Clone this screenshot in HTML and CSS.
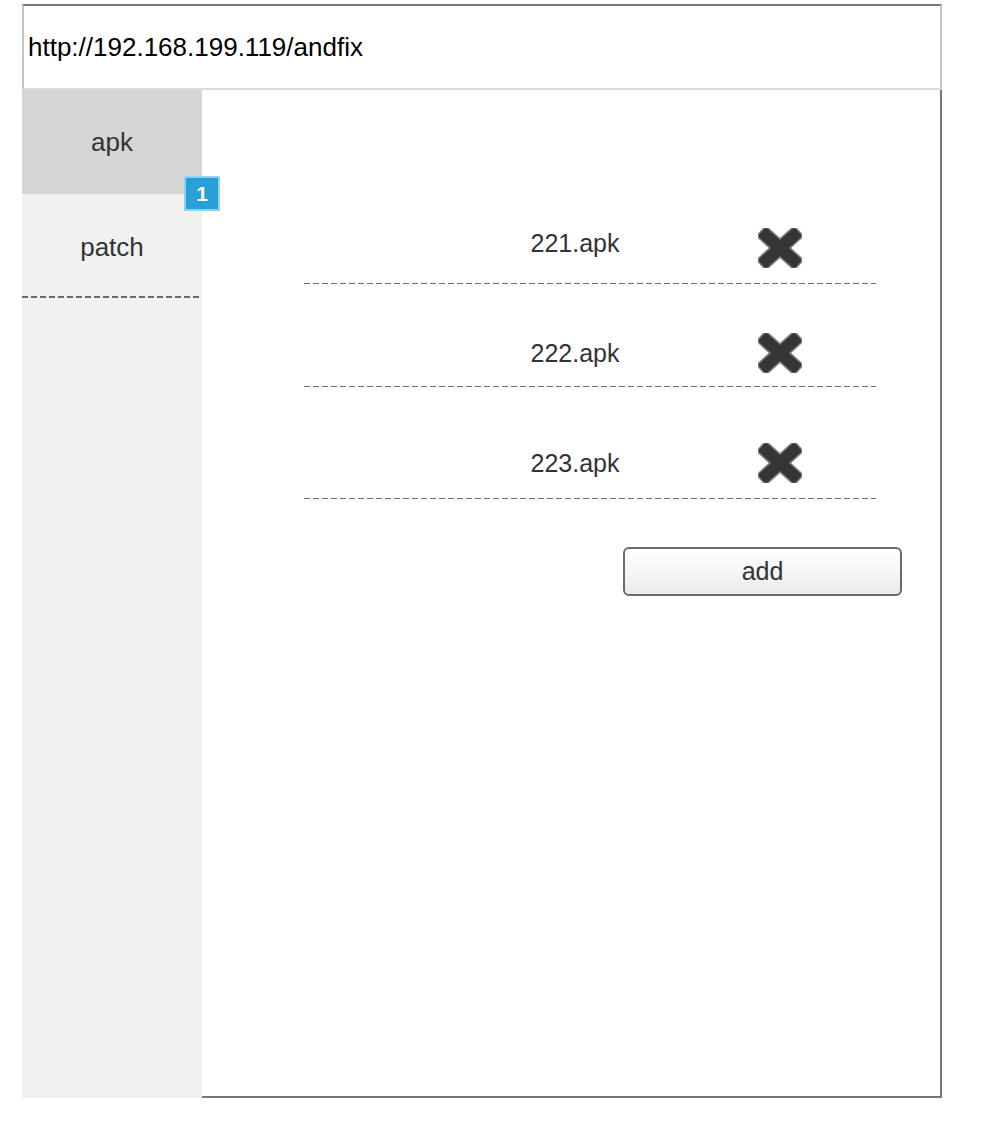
FILE: index.html
```html
<!DOCTYPE html>
<html>
<head>
<meta charset="utf-8">
<link rel="stylesheet" href="styles.css">
</head>
<body>
<div class="frame">
  <div class="urlbar">http://192.168.199.119/andfix</div>
  <div class="body">
    <div class="sidebar">
      <div class="tab tab-active">apk</div>
      <div class="tab tab-patch">patch</div>
      <div class="badge">1</div>
    </div>
    <div class="main">
      <div class="list">
        <div class="row row-1">
          <div class="name">221.apk</div>
          <svg class="del del-low" viewBox="0 0 44 40" width="44" height="40">
            <rect x="-26" y="-7.5" width="52" height="15" rx="4" fill="#7c7c7c" transform="translate(22 20) rotate(42)"/>
            <rect x="-26" y="-7.5" width="52" height="15" rx="4" fill="#7c7c7c" transform="translate(22 20) rotate(-42)"/>
            <rect x="-24.5" y="-6" width="49" height="12" rx="3" fill="#353535" transform="translate(22 20) rotate(42)"/>
            <rect x="-24.5" y="-6" width="49" height="12" rx="3" fill="#353535" transform="translate(22 20) rotate(-42)"/>
          </svg>
        </div>
        <div class="row row-2">
          <div class="name">222.apk</div>
          <svg class="del" viewBox="0 0 44 40" width="44" height="40">
            <rect x="-26" y="-7.5" width="52" height="15" rx="4" fill="#7c7c7c" transform="translate(22 20) rotate(42)"/>
            <rect x="-26" y="-7.5" width="52" height="15" rx="4" fill="#7c7c7c" transform="translate(22 20) rotate(-42)"/>
            <rect x="-24.5" y="-6" width="49" height="12" rx="3" fill="#353535" transform="translate(22 20) rotate(42)"/>
            <rect x="-24.5" y="-6" width="49" height="12" rx="3" fill="#353535" transform="translate(22 20) rotate(-42)"/>
          </svg>
        </div>
        <div class="row row-3">
          <div class="name">223.apk</div>
          <svg class="del" viewBox="0 0 44 40" width="44" height="40">
            <rect x="-26" y="-7.5" width="52" height="15" rx="4" fill="#7c7c7c" transform="translate(22 20) rotate(42)"/>
            <rect x="-26" y="-7.5" width="52" height="15" rx="4" fill="#7c7c7c" transform="translate(22 20) rotate(-42)"/>
            <rect x="-24.5" y="-6" width="49" height="12" rx="3" fill="#353535" transform="translate(22 20) rotate(42)"/>
            <rect x="-24.5" y="-6" width="49" height="12" rx="3" fill="#353535" transform="translate(22 20) rotate(-42)"/>
          </svg>
        </div>
      </div>
      <button class="add">add</button>
    </div>
  </div>
</div>
</body>
</html>
```

FILE: styles.css
```css
html, body {
  margin: 0;
  padding: 0;
  background: #fff;
}
body {
  font-family: "Liberation Sans", Arial, Helvetica, sans-serif;
}
.frame {
  margin: 4px 0 0 22px;
  width: 920px;
}
.urlbar {
  box-sizing: border-box;
  height: 86px;
  border-top: 2px solid #777;
  border-left: 2px solid #c4c4c4;
  border-right: 2px solid #c4c4c4;
  border-bottom: 2px solid #dcdcdc;
  padding: 26px 0 0 4px;
  font-size: 26px;
  line-height: 30px;
  color: #000;
}
.body {
  display: flex;
  height: 1008px;
}
.sidebar {
  position: relative;
  width: 180px;
  background: #f1f1f1;
  flex: none;
}
.tab {
  height: 104px;
  display: flex;
  align-items: center;
  justify-content: center;
  font-size: 26px;
  color: #333;
  box-sizing: border-box;
}
.tab-active {
  background: #d6d6d6;
}
.tab-patch {
  padding-top: 2px;
  background-image: linear-gradient(to right, #6a6a6a 0 6px, transparent 6px 9px);
  background-size: 9px 2px;
  background-repeat: repeat-x;
  background-position: 0 100%;
}
.badge {
  position: absolute;
  left: 162px;
  top: 86px;
  width: 36px;
  height: 35px;
  box-sizing: border-box;
  border: 2px solid #8fd3f2;
  background: #279fd8;
  color: #fff;
  font-weight: bold;
  font-size: 21px;
  display: flex;
  align-items: center;
  justify-content: center;
}
.main {
  flex: 1;
  border-right: 2px solid #777;
  border-bottom: 2px solid #777;
  height: 1008px;
  box-sizing: border-box;
}
.list {
  margin: 113px 0 0 102px;
  width: 572px;
}
.row {
  display: flex;
  align-items: center;
  height: 40px;
  background-image: linear-gradient(to right, #707070 0 6px, transparent 6px 9px);
  background-size: 9px 1px;
  background-repeat: repeat-x;
  background-position: 0 100%;
}
.row-1 { padding: 20px 0 21px; }
.row-2 { padding: 49px 0 14px; }
.row-3 { padding: 56px 0 16px; }
.name {
  width: 200px;
  margin-left: 171px;
  text-align: center;
  font-size: 25px;
  color: #333;
}
.del {
  margin-left: 83px;
  display: block;
}
.del-low {
  margin-top: 10px;
}
.add {
  display: block;
  margin: 48px 0 0 421px;
  width: 279px;
  height: 49px;
  border: 2px solid #6a6a6a;
  border-radius: 6px;
  background: linear-gradient(#ffffff, #ececec);
  font-family: "Liberation Sans", Arial, sans-serif;
  font-size: 25px;
  color: #333;
  padding: 0;
}
```
